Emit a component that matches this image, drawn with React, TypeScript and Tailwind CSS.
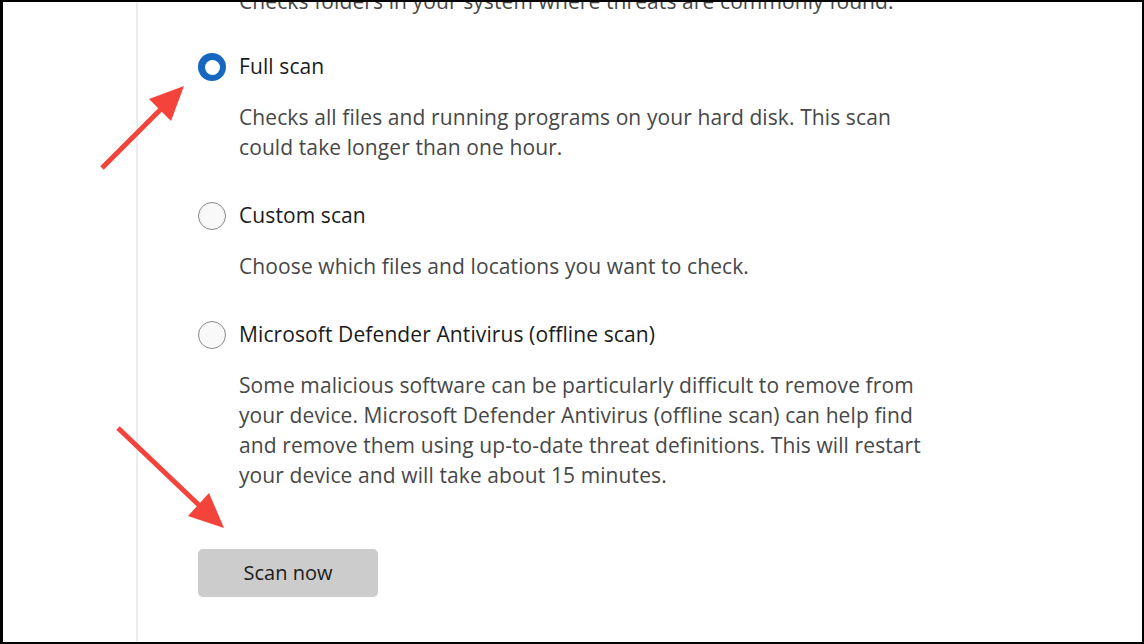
import React from "react"

const font = { fontFamily: '"Open Sans", "Noto Sans", sans-serif' }

function Radio({ checked }: { checked?: boolean }) {
  if (checked) {
    return (
      <div className="w-[28px] h-[28px] rounded-full bg-[#1667c0] flex items-center justify-center shrink-0">
        <div className="w-[15px] h-[15px] rounded-full bg-white" />
      </div>
    )
  }
  return <div className="w-[28px] h-[28px] rounded-full border border-[#8a8a8a] bg-[#f9f9f9] shrink-0" />
}

interface ScanOption {
  title: string
  lines: string[]
  checked?: boolean
}

const options: ScanOption[] = [
  {
    title: "Full scan",
    checked: true,
    lines: ["Checks all files and running programs on your hard disk. This scan", "could take longer than one hour."],
  },
  {
    title: "Custom scan",
    lines: ["Choose which files and locations you want to check."],
  },
  {
    title: "Microsoft Defender Antivirus (offline scan)",
    lines: [
      "Some malicious software can be particularly difficult to remove from",
      "your device. Microsoft Defender Antivirus (offline scan) can help find",
      "and remove them using up-to-date threat definitions. This will restart",
      "your device and will take about 15 minutes.",
    ],
  },
]

export default function App() {
  return (
    <div className="relative w-[1144px] h-[644px] bg-white overflow-hidden border-t-2 border-b-2 border-l-[3px] border-r-2 border-black" style={font}>
      <div className="flex h-full">
        <div className="w-[133px] shrink-0" />
        <div className="w-[2px] bg-[#ececec] shrink-0" />
        <div className="flex-1 pl-[60px]">
          <div className="pl-[41px] -mt-[16px] text-[21px] tracking-[0.1px] leading-[30px] text-[#474747] whitespace-nowrap">
            Checks folders in your system where threats are commonly found.
          </div>
          <div className="flex flex-col gap-[39px] mt-[36px]">
            {options.map((o) => (
              <div key={o.title} className="flex flex-col">
                <div className="flex items-center gap-[13px] h-[30px]">
                  <Radio checked={o.checked} />
                  <span className="text-[21px] tracking-[0.1px] text-[#1b1b1b] whitespace-nowrap">{o.title}</span>
                </div>
                <div className="pl-[41px] mt-[20px] text-[21px] tracking-[0.1px] leading-[30px] text-[#474747]">
                  {o.lines.map((l) => (
                    <div key={l} className="whitespace-nowrap">{l}</div>
                  ))}
                </div>
              </div>
            ))}
          </div>
          <button className="mt-[59px] w-[180px] h-[48px] rounded-[5px] bg-[#cccccc] text-[20px] text-[#1b1b1b]">
            Scan now
          </button>
        </div>
      </div>
      <svg className="absolute left-0 top-0 pointer-events-none" width="1144" height="644">
        <g transform="translate(-3,-2)">
          <line x1="102" y1="168" x2="163" y2="107" stroke="#f4433a" strokeWidth="5" />
          <polygon points="184,86 149,99 171,121" fill="#f4433a" />
          <line x1="118" y1="428" x2="202" y2="508" stroke="#f4433a" strokeWidth="5" />
          <polygon points="224,528 188,516 209,493" fill="#f4433a" />
        </g>
      </svg>
    </div>
  )
}
